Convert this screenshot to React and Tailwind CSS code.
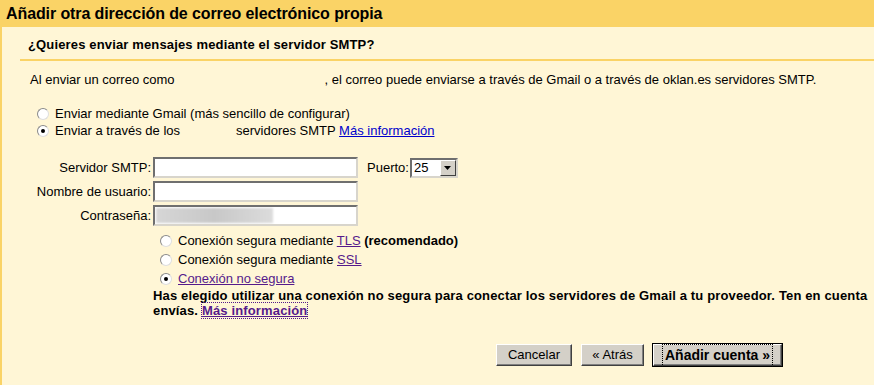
import React from 'react'

function Radio({ checked }) {
  return (
    <span className="relative inline-block w-[12px] h-[12px] shrink-0 rounded-full border border-t-[#8a8a8a] border-l-[#8a8a8a] border-b-[#dedede] border-r-[#dedede] bg-white">
      {checked && <span className="absolute left-[3px] top-[3px] w-[4px] h-[4px] rounded-full bg-black" />}
    </span>
  )
}

function TextBox({ children }) {
  return (
    <div className="relative w-[205px] h-[21px] bg-white border-2 border-t-[#6f6f6f] border-l-[#6f6f6f] border-b-[#d8d5cc] border-r-[#d8d5cc] overflow-hidden">
      {children}
    </div>
  )
}

function Button({ children, primary }) {
  return (
    <div
      className={`h-[22px] flex items-center justify-center bg-[#d4d0c8] border border-t-white border-l-white border-b-[#404040] border-r-[#404040] shadow-[inset_-1px_-1px_0_#808080] ${
        primary ? 'outline outline-1 outline-black' : ''
      }`}
    >
      {children}
    </div>
  )
}

export default function App() {
  return (
    <div className="w-[874px] h-[385px] overflow-hidden bg-[#fff6d6] text-black text-[13px] font-['Liberation_Sans',Arial,sans-serif]">
      {/* Title bar */}
      <div className="h-[27px] bg-[#fad366] px-[6px] flex items-center text-[16px] font-bold tracking-[-0.1px]">
        Añadir otra dirección de correo electrónico propia
      </div>

      <div className="h-[358px] border-l-2 border-[#fad366]">
        {/* Section header */}
        <div className="ml-[18px] h-[34px] pt-[4px] pl-[8px] flex items-center border-b-2 border-[#fad366] font-bold tracking-[0.15px]">
          ¿Quieres enviar mensajes mediante el servidor SMTP?
        </div>

        <p className="ml-[28px] mt-[11px] leading-[16px] whitespace-nowrap">
          Al enviar un correo como<span className="inline-block w-[150px]" />, el correo puede enviarse a través de Gmail o a través de oklan.es servidores SMTP.
        </p>

        {/* Send method */}
        <div className="ml-[35px] mt-[17px] flex flex-col">
          <label className="h-[17px] flex items-center gap-[6px]">
            <Radio />
            <span>Enviar mediante Gmail (más sencillo de configurar)</span>
          </label>
          <label className="h-[17px] flex items-center gap-[6px]">
            <Radio checked />
            <span className="whitespace-nowrap">
              Enviar a través de los<span className="inline-block w-[56px]" />servidores SMTP{' '}
              <a className="text-[#0000cc] underline">Más información</a>
            </span>
          </label>
        </div>

        {/* SMTP form */}
        <div className="mt-[18px] flex flex-col gap-[3px]">
          <div className="flex items-center">
            <span className="w-[149px] text-right">Servidor SMTP:</span>
            <div className="ml-[2px]"><TextBox /></div>
            <span className="ml-[9px]">Puerto:</span>
            <div className="ml-[1px] w-[48px] h-[20px] bg-white border-2 border-t-[#6f6f6f] border-l-[#6f6f6f] border-b-[#d8d5cc] border-r-[#d8d5cc] flex items-center justify-between">
              <span className="pl-[2px] leading-none">25</span>
              <span className="w-[16px] h-[16px] bg-[#d4d0c8] border border-t-white border-l-white border-b-[#404040] border-r-[#404040] flex items-center justify-center">
                <svg width="7" height="4" viewBox="0 0 7 4"><path d="M0 0h7L3.5 4z" fill="#000" /></svg>
              </span>
            </div>
          </div>
          <div className="flex items-center">
            <span className="w-[149px] text-right">Nombre de usuario:</span>
            <div className="ml-[2px]"><TextBox /></div>
          </div>
          <div className="flex items-center">
            <span className="w-[149px] text-right">Contraseña:</span>
            <div className="ml-[2px]">
              <TextBox>
                <div className="absolute left-[1px] top-[1px] w-[117px] h-[15px] bg-gradient-to-r from-[#d6d6d6] via-[#c8c8c8] to-[#dcdcdc] blur-[1px]" />
              </TextBox>
            </div>
          </div>
        </div>

        {/* Security */}
        <div className="ml-[158px] mt-[5px] flex flex-col">
          <label className="h-[19px] flex items-center gap-[6px]">
            <Radio />
            <span>
              Conexión segura mediante <a className="text-[#551a8b] underline">TLS</a> <b>(recomendado)</b>
            </span>
          </label>
          <label className="h-[19px] flex items-center gap-[6px]">
            <Radio />
            <span>
              Conexión segura mediante <a className="text-[#551a8b] underline">SSL</a>
            </span>
          </label>
          <label className="h-[19px] flex items-center gap-[6px]">
            <Radio checked />
            <a className="text-[#551a8b] underline">Conexión no segura</a>
          </label>
        </div>

        <div className="ml-[151px] font-bold leading-[15px] whitespace-nowrap tracking-[0.15px]">
          <div>Has elegido utilizar una conexión no segura para conectar los servidores de Gmail a tu proveedor. Ten en cuenta</div>
          <div>
            envías.{' '}
            <a className="text-[#551a8b] underline outline outline-1 outline-dotted outline-[#551a8b]">Más información</a>
          </div>
        </div>

        {/* Buttons */}
        <div className="ml-[494px] mt-[26px] flex gap-[9px]">
          <div className="w-[76px]"><Button>Cancelar</Button></div>
          <div className="w-[63px]"><Button>« Atrás</Button></div>
          <div className="w-[129px]">
            <Button primary>
              <span className="font-bold text-[14px] px-[2px] outline outline-1 outline-dotted outline-black">Añadir cuenta »</span>
            </Button>
          </div>
        </div>
      </div>
    </div>
  )
}
